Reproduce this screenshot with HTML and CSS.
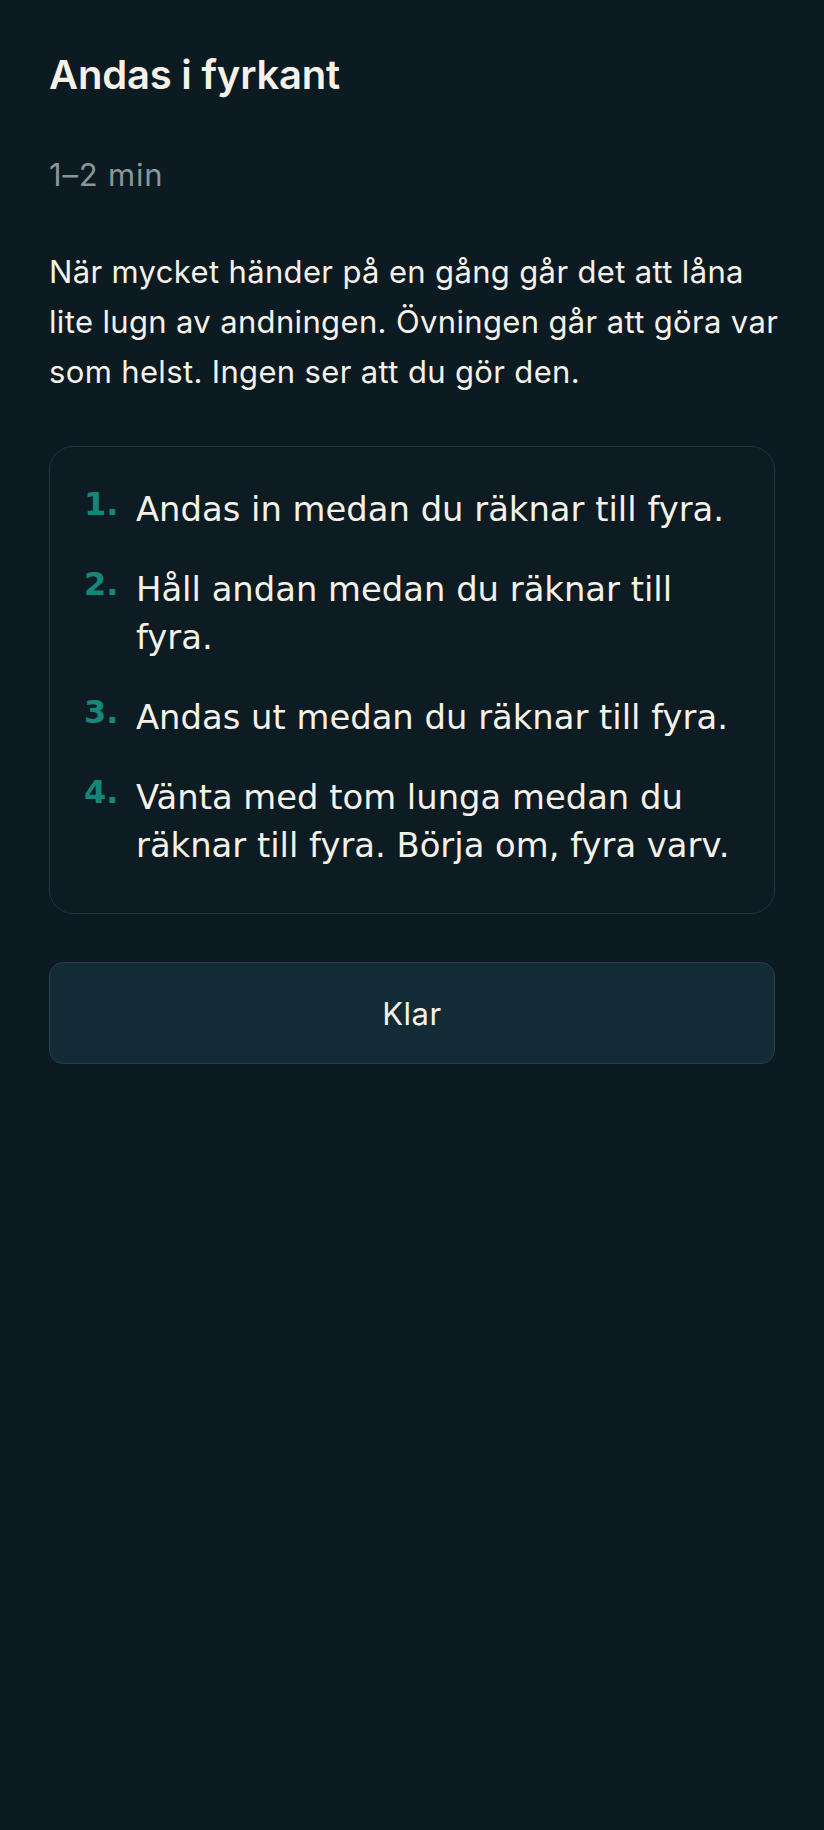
FILE: index.html
```html
<!DOCTYPE html>
<html lang="sv">
<head>
  <meta charset="UTF-8">
  <title>Andas i fyrkant</title>
  <meta name="viewport" content="width=device-width, initial-scale=1">
  <link rel="stylesheet" href="styles.css">
</head>
<body>
<main class="exercise">
  <h1 class="exercise-title">Andas i fyrkant</h1>
  <p class="exercise-time">1–2 min</p>
  <p class="exercise-intro">När mycket händer på en gång går det att låna lite lugn av andningen. Övningen går att göra var som helst. Ingen ser att du gör den.</p>

  <ol class="steps">
    <li class="step"><span class="step-num">1.</span><span class="step-text">Andas in medan du räknar till fyra.</span></li>
    <li class="step"><span class="step-num">2.</span><span class="step-text">Håll andan medan du räknar till fyra.</span></li>
    <li class="step"><span class="step-num">3.</span><span class="step-text">Andas ut medan du räknar till fyra.</span></li>
    <li class="step"><span class="step-num">4.</span><span class="step-text">Vänta med tom lunga medan du räknar till fyra. Börja om, fyra varv.</span></li>
  </ol>

  <button class="done-btn" type="button">Klar</button>
</main>
</body>
</html>
```

FILE: styles.css
```css
*{box-sizing:border-box;}
html,body{background:#0c1a22;}
body{margin:0;color:#f5f1e8;font-family:Inter,"Noto Sans",sans-serif;}
.exercise{padding:51px 49px 80px;display:flex;flex-direction:column;}
.exercise-title{margin:0;font-size:40px;line-height:48px;font-weight:600;letter-spacing:-0.2px;}
.exercise-time{margin:58px 0 0;font-size:31px;line-height:36px;color:#8b969b;letter-spacing:0.8px;}
/* a touch wider than the card so "var" stays on line two */
.exercise-intro{margin:54px -12px 0 0;font-size:31px;line-height:50px;letter-spacing:0.35px;}

.steps{list-style:none;margin:49px 0 0;padding:39px 34px 43px;border:1px solid #24343d;border-radius:24px;background:#0d1b23;display:flex;flex-direction:column;gap:32px;font-family:"DejaVu Sans",sans-serif;}
.step{display:grid;grid-template-columns:36px 1fr;column-gap:16px;align-items:start;}
.step-num{font-size:32px;line-height:36px;font-weight:700;color:#15877a;}
.step-text{font-size:33.8px;line-height:48px;}

.done-btn{margin-top:48px;height:102px;border:1px solid #2a3e48;border-radius:14px;background:#132b36;color:#f5f1e8;font-family:Inter,"Noto Sans",sans-serif;font-size:31px;letter-spacing:0.5px;cursor:pointer;}
```
